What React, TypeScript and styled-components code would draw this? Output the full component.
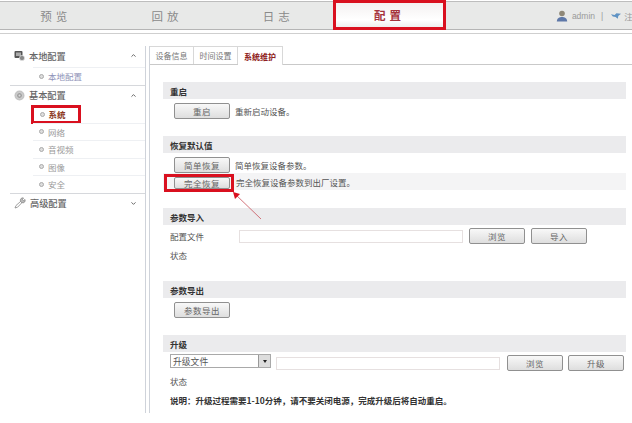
import React from "react";
import styled, { createGlobalStyle } from "styled-components";
import { ChevronDown, ChevronUp } from "lucide-react";

const GlobalStyle = createGlobalStyle`
  html, body {
    margin: 0;
    padding: 0;
    background: #fff;
  }
  body {
    font-family: "Noto Sans CJK SC", "Liberation Sans", sans-serif;
    font-size: 9px;
    color: #555;
  }
`;

const Page = styled.div`
  position: relative;
  width: 632px;
  height: 423px;
  overflow: hidden;
`;

const TopBar = styled.header`
  display: flex;
  align-items: stretch;
  height: 27px;
  margin-top: 1px;
  background: #e8e9e8;
  border-top: 1px solid #bdbdbd;
  border-bottom: 1px solid #b5b5b5;
`;

const NavTab = styled.div`
  width: 111.3px;
  display: flex;
  align-items: center;
  justify-content: center;
  font-size: 11.5px;
  letter-spacing: 4px;
  color: #8a8a8a;
`;

const ActiveNavTab = styled(NavTab)`
  width: 113px;
  height: 30px;
  margin: -2px 0 0 -1px;
  box-sizing: border-box;
  border: 3px solid #d9101f;
  background: linear-gradient(#f4f1f1, #fff 70%, #eee);
  color: #a5333c;
  font-weight: 700;
`;

const UserArea = styled.div`
  flex: 1;
  display: flex;
  align-items: center;
  padding-left: 110px;
  gap: 3px;
  color: #9a9a9a;
  font-family: "Liberation Sans", "Noto Sans CJK SC", sans-serif;
  font-size: 8.5px;
  white-space: nowrap;
  overflow: hidden;
  svg {
    flex-shrink: 0;
  }
`;

const UserName = styled.span`
  margin-left: 1px;
`;

const Separator = styled.span`
  margin: 0 5px 0 3px;
`;

const Main = styled.div`
  display: flex;
  height: 390px;
  margin-top: 3px;
  border-top: 1px solid #cfcfcf;
  padding-top: 12px;
`;

const Sidebar = styled.aside`
  width: 135px;
  margin-left: 10px;
  border-right: 1px solid #cfd3da;
  height: 367px;
  font-size: 8.5px;
`;

const Group = styled.div<{ $last?: boolean }>`
  border-bottom: ${p => (p.$last ? "none" : "1px solid #d6d8dc")};
`;

const GroupTitle = styled.div`
  display: flex;
  align-items: center;
  height: 19px;
  margin-bottom: 2px;
  padding: 0 8px 0 4px;
  gap: 4px;
  color: #666;
  font-size: 9.2px;
  font-weight: 500;
`;

const TitleText = styled.span`
  flex: 1;
`;

const SubItem = styled.div<{ $active?: boolean; $link?: boolean }>`
  display: flex;
  align-items: center;
  height: 16.5px;
  margin-left: 23px;
  padding-left: 6px;
  gap: 4px;
  border-top: 1px solid #eef0f3;
  color: ${p => (p.$active ? "#8c3a1e" : p.$link ? "#8f93b8" : "#9a9a9a")};
  font-weight: ${p => (p.$active ? 700 : 400)};
  &:first-of-type {
    border-top: none;
  }
`;

const ActiveSubItem = styled(SubItem)`
  width: 50px;
  height: 19px;
  margin: -2px 0 -1px 21px;
  padding-left: 5.5px;
  box-sizing: border-box;
  border: 3px solid #d9101f;
  &:first-of-type {
    border-top: 3px solid #d9101f;
  }
`;

const Dot = styled.i`
  flex-shrink: 0;
  width: 3px;
  height: 3px;
  border: 1px solid #aaa;
  border-radius: 50%;
  background: #ddd;
`;

const Content = styled.section`
  flex: 1;
  margin-left: 3px;
  border-left: 1px solid #cfd3da;
  height: 367px;
`;

const TabRow = styled.div`
  display: flex;
  height: 18px;
  border-bottom: 1px solid #c9c9c9;
  font-size: 8px;
`;

const PanelTab = styled.div<{ $active?: boolean }>`
  display: flex;
  align-items: center;
  justify-content: center;
  width: ${p => (p.$active ? "45px" : "44px")};
  height: ${p => (p.$active ? "19px" : "18px")};
  box-sizing: border-box;
  border-top: 1px solid #d8d8d8;
  border-right: 1px solid #d8d8d8;
  background: #fff;
  color: ${p => (p.$active ? "#8e2020" : "#777")};
  font-weight: ${p => (p.$active ? 700 : 400)};
`;

const Sections = styled.div`
  padding: 17px 6px 0 13px;
`;

const Section = styled.div<{ $gap: number }>`
  margin-bottom: ${p => p.$gap}px;
`;

const SectionTitle = styled.div`
  height: 17px;
  display: flex;
  align-items: center;
  padding-left: 7px;
  margin-bottom: 3px;
  background: #ebebed;
  color: #333;
  font-size: 8.5px;
  font-weight: 700;
`;

const ActionRow = styled.div<{ $shaded?: boolean }>`
  display: flex;
  align-items: center;
  gap: 5px;
  height: 17px;
  padding-left: 11px;
  background: ${p => (p.$shaded ? "#f4f4f5" : "transparent")};
  font-size: 8.5px;
  color: #555;
`;

const Button = styled.div<{ $ml?: number }>`
  display: flex;
  align-items: center;
  justify-content: center;
  box-sizing: border-box;
  flex-shrink: 0;
  width: 56px;
  height: 16px;
  margin-left: ${p => p.$ml ?? 0}px;
  border: 1px solid #909090;
  border-radius: 2px;
  background: linear-gradient(#f8f8f8, #dedede);
  color: #666;
  font-size: 8.5px;
  letter-spacing: 0.5px;
`;

const Highlight = styled.div`
  display: flex;
  align-items: center;
  box-sizing: border-box;
  flex-shrink: 0;
  width: 70px;
  height: 18px;
  margin: 3px -3px 0 -10px;
  padding-left: 7px;
  border: 3px solid #d9101f;
  ${Button} {
    width: 56px;
    height: 12px;
  }
`;

const FieldRow = styled.div`
  display: flex;
  align-items: center;
  height: 16px;
  padding-left: 7px;
  font-size: 8.5px;
  color: #555;
`;

const FieldLabel = styled.span`
  width: 69px;
`;

const StatusRow = styled.div<{ $top: number }>`
  padding-left: 7px;
  margin-top: ${p => p.$top}px;
  font-size: 8.5px;
  line-height: 12px;
  color: #555;
`;

const FileInput = styled.div<{ $width: number }>`
  box-sizing: border-box;
  width: ${p => p.$width}px;
  height: 13px;
  border: 1px solid #e6e0e0;
  background: #fff;
`;

const Select = styled.div`
  display: flex;
  align-items: center;
  justify-content: space-between;
  box-sizing: border-box;
  align-self: flex-start;
  width: 101px;
  height: 14px;
  margin: -1px 5px 0 0;
  padding-left: 2px;
  border: 1px solid #a9a9a9;
  color: #555;
  font-size: 8.8px;
`;

const SelectArrow = styled.span`
  display: flex;
  align-items: center;
  justify-content: center;
  width: 11px;
  height: 12px;
  background: #ddd;
  border-left: 1px solid #999;
  &::after {
    content: "";
    border-left: 2.5px solid transparent;
    border-right: 2.5px solid transparent;
    border-top: 3px solid #222;
  }
`;

const Note = styled.div`
  padding-left: 7px;
  margin-top: 7px;
  color: #333;
  font-size: 8.5px;
  line-height: 12px;
  font-weight: 700;
`;

const ArrowOverlay = styled.svg`
  position: absolute;
  left: 225px;
  top: 185px;
  width: 45px;
  height: 40px;
  pointer-events: none;
`;

const LocalIcon = () => (
  <svg width="11" height="11" viewBox="0 0 11 11">
    <rect x="0.5" y="1" width="8" height="7" rx="1" fill="#555" />
    <rect x="2" y="2.5" width="5" height="3.5" fill="#aaa" />
    <circle cx="8" cy="8" r="2.6" fill="#888" stroke="#eee" strokeWidth="0.6" />
  </svg>
);

const BasicIcon = () => (
  <svg width="11" height="11" viewBox="0 0 11 11">
    <circle cx="5.5" cy="5.5" r="5" fill="#c4c4c4" />
    <circle cx="5.5" cy="5.5" r="3" fill="#a0a0a0" stroke="#dcdcdc" strokeWidth="0.8" />
    <circle cx="5.5" cy="5.5" r="1" fill="#ddd" />
  </svg>
);

const WrenchIcon = () => (
  <svg width="12" height="12" viewBox="0 0 12 12">
    <path d="M1 11 L2 8.5 L6.5 4.5 L7.8 5.8 L3.6 10.2 Z" fill="#fff" stroke="#888" strokeWidth="0.8" />
    <path d="M6.6 4.4 A2.4 2.4 0 0 1 9.6 1 L8.4 2.6 L9.6 3.6 L11 2.4 A2.4 2.4 0 0 1 7.8 5.6 Z" fill="#bbb" stroke="#777" strokeWidth="0.6" />
  </svg>
);

const UserIcon = () => (
  <svg width="12" height="12" viewBox="0 0 12 12">
    <circle cx="6" cy="3.5" r="2.8" fill="#8f8878" />
    <path d="M0.8 11.5 C1 8 3.5 7 6 7 C8.5 7 11 8 11.2 11.5 Z" fill="#5e78a8" />
  </svg>
);

const LogoutIcon = () => (
  <svg width="10" height="8" viewBox="0 0 11 8">
    <path d="M0 2 L4 3 L6 1 L11 1.5 L8 4 L7.5 7 L5 5 L2 4.5 Z" fill="#5f93c4" />
  </svg>
);

const App: React.FC = () => {
  return (
    <Page>
      <GlobalStyle />
      <TopBar>
        <NavTab>预览</NavTab>
        <NavTab>回放</NavTab>
        <NavTab>日志</NavTab>
        <ActiveNavTab>配置</ActiveNavTab>
        <UserArea>
          <UserIcon />
          <UserName>admin</UserName>
          <Separator>|</Separator>
          <LogoutIcon />
          <span>注</span>
        </UserArea>
      </TopBar>
      <Main>
        <Sidebar>
          <Group>
            <GroupTitle>
              <LocalIcon />
              <TitleText>本地配置</TitleText>
              <ChevronUp size={7} strokeWidth={3} color="#555" />
            </GroupTitle>
            <SubItem $link>
              <Dot />
              本地配置
            </SubItem>
          </Group>
          <Group>
            <GroupTitle>
              <BasicIcon />
              <TitleText>基本配置</TitleText>
              <ChevronUp size={7} strokeWidth={3} color="#555" />
            </GroupTitle>
            <ActiveSubItem $active>
              <Dot />
              系统
            </ActiveSubItem>
            <SubItem>
              <Dot />
              网络
            </SubItem>
            <SubItem>
              <Dot />
              音视频
            </SubItem>
            <SubItem>
              <Dot />
              图像
            </SubItem>
            <SubItem>
              <Dot />
              安全
            </SubItem>
          </Group>
          <Group $last>
            <GroupTitle>
              <WrenchIcon />
              <TitleText>高级配置</TitleText>
              <ChevronDown size={7} strokeWidth={3} color="#555" />
            </GroupTitle>
          </Group>
        </Sidebar>
        <Content>
          <TabRow>
            <PanelTab>设备信息</PanelTab>
            <PanelTab>时间设置</PanelTab>
            <PanelTab $active>系统维护</PanelTab>
          </TabRow>
          <Sections>
            <Section $gap={17}>
              <SectionTitle>重启</SectionTitle>
              <ActionRow>
                <Button>重启</Button>
                重新启动设备。
              </ActionRow>
            </Section>
            <Section $gap={18}>
              <SectionTitle>恢复默认值</SectionTitle>
              <ActionRow>
                <Button>简单恢复</Button>
                简单恢复设备参数。
              </ActionRow>
              <ActionRow $shaded>
                <Highlight>
                  <Button>完全恢复</Button>
                </Highlight>
                完全恢复设备参数到出厂设置。
              </ActionRow>
            </Section>
            <Section $gap={20}>
              <SectionTitle>参数导入</SectionTitle>
              <FieldRow>
                <FieldLabel>配置文件</FieldLabel>
                <FileInput $width={224} />
                <Button $ml={6}>浏览</Button>
                <Button $ml={6}>导入</Button>
              </FieldRow>
              <StatusRow $top={5}>状态</StatusRow>
            </Section>
            <Section $gap={17}>
              <SectionTitle>参数导出</SectionTitle>
              <ActionRow>
                <Button>参数导出</Button>
              </ActionRow>
            </Section>
            <Section $gap={0}>
              <SectionTitle>升级</SectionTitle>
              <FieldRow>
                <Select>
                  升级文件
                  <SelectArrow />
                </Select>
                <FileInput $width={224} />
                <Button $ml={7}>浏览</Button>
                <Button $ml={5}>升级</Button>
              </FieldRow>
              <StatusRow $top={4}>状态</StatusRow>
              <Note>说明：升级过程需要1-10分钟，请不要关闭电源，完成升级后将自动重启。</Note>
            </Section>
          </Sections>
        </Content>
      </Main>
      <ArrowOverlay viewBox="0 0 45 40">
        <path d="M36 34 L10 9" stroke="#c8505a" strokeWidth="0.8" fill="none" />
        <path d="M8 7 L15 9 L10 14 Z" fill="#d9101f" />
      </ArrowOverlay>
    </Page>
  );
};

export default App;
